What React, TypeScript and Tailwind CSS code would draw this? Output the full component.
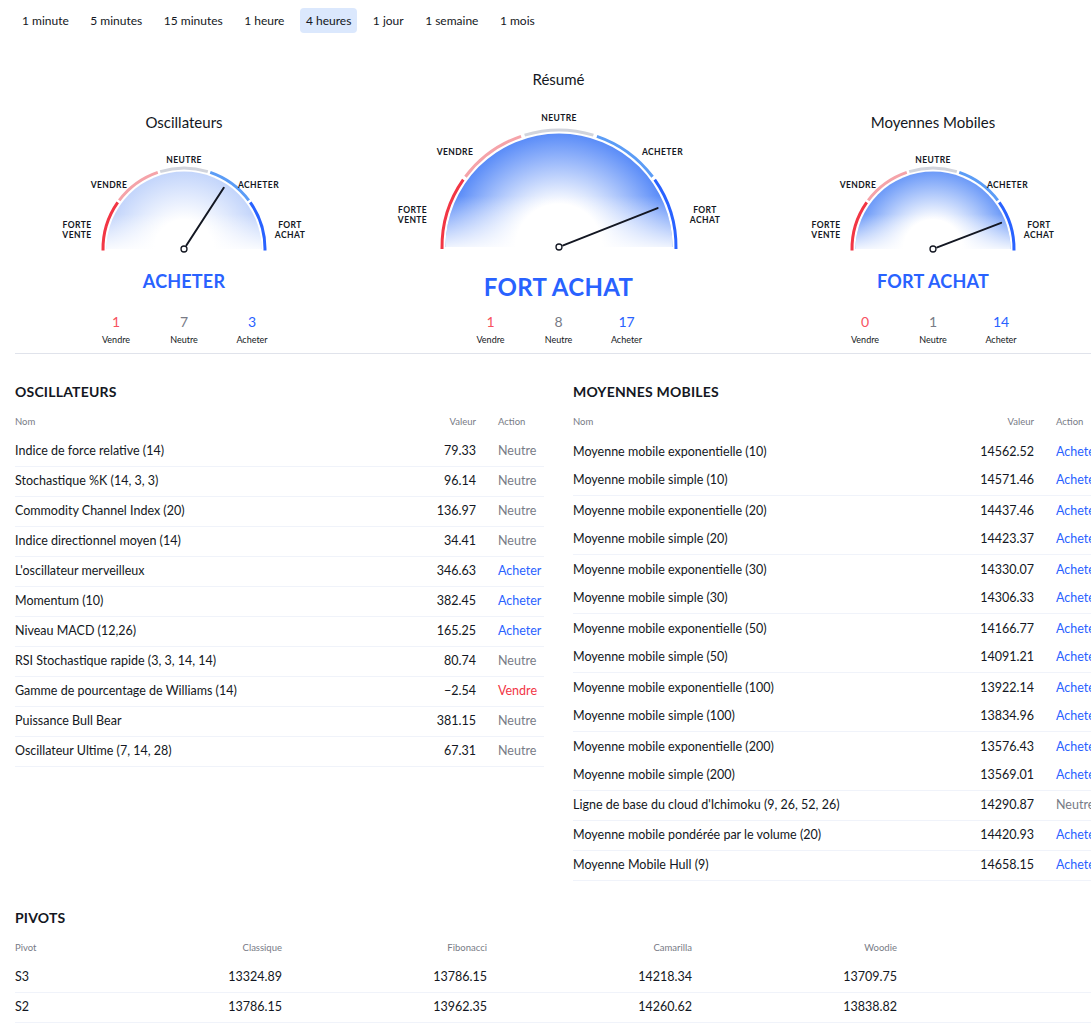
import React from 'react';

const FONT = "'Lato', 'Liberation Sans', sans-serif";

type Seg = { a1: number; a2: number; c: string };
const SEGS: Seg[] = [
  { a1: 181, a2: 144, c: '#f23645' },
  { a1: 144, a2: 108, c: '#f5a3a9' },
  { a1: 108, a2: 72, c: '#d1d4dc' },
  { a1: 72, a2: 36, c: '#5b9cf6' },
  { a1: 36, a2: -1, c: '#2962ff' },
];

function pt(cx: number, cy: number, r: number, a: number): [number, number] {
  const rad = (a * Math.PI) / 180;
  return [cx + r * Math.cos(rad), cy - r * Math.sin(rad)];
}

type Label = { x: number; y: number; lines: string[] };

function GaugeSvg(props: {
  id: string;
  w: number;
  h: number;
  cx: number;
  cy: number;
  R: number;
  angle: number;
  len: number;
  fill: string;
  labels: Label[];
}) {
  const { id, w, h, cx, cy, R, angle, len, fill, labels } = props;
  const g = 0.9;
  const fr = R - 3.5;
  const [nx0, ny0] = pt(cx, cy, 4.5, angle);
  const [nx1, ny1] = pt(cx, cy, len, angle);
  return (
    <svg width={w} height={h} viewBox={`0 0 ${w} ${h}`} className="block">
      <defs>
        <radialGradient id={`rg-${id}`} gradientUnits="userSpaceOnUse" cx={cx} cy={cy} r={fr}>
          <stop offset="0" stopColor="#ffffff" />
          <stop offset="0.38" stopColor="#ffffff" />
          <stop offset="1" stopColor={fill} />
        </radialGradient>
        <linearGradient id={`lg-${id}`} gradientUnits="userSpaceOnUse" x1="0" y1={cy - fr * 0.45} x2="0" y2={cy}>
          <stop offset="0" stopColor="#ffffff" stopOpacity="0" />
          <stop offset="1" stopColor="#ffffff" stopOpacity="0.9" />
        </linearGradient>
      </defs>
      <path d={`M ${cx - fr} ${cy} A ${fr} ${fr} 0 0 1 ${cx + fr} ${cy} Z`} fill={`url(#rg-${id})`} />
      <path d={`M ${cx - fr} ${cy} A ${fr} ${fr} 0 0 1 ${cx + fr} ${cy} Z`} fill={`url(#lg-${id})`} />
      {SEGS.map((s, i) => {
        const a1 = i === 0 ? s.a1 : s.a1 - g;
        const a2 = i === SEGS.length - 1 ? s.a2 : s.a2 + g;
        const [x1, y1] = pt(cx, cy, R, a1);
        const [x2, y2] = pt(cx, cy, R, a2);
        return (
          <path
            key={i}
            d={`M ${x1} ${y1} A ${R} ${R} 0 0 1 ${x2} ${y2}`}
            stroke={s.c}
            strokeWidth={3}
            fill="none"
          />
        );
      })}
      <line x1={nx0} y1={ny0} x2={nx1} y2={ny1} stroke="#131722" strokeWidth={2} strokeLinecap="round" />
      <circle cx={cx} cy={cy} r={3} fill="#ffffff" stroke="#131722" strokeWidth={1.3} />
      {labels.map((l, i) => (
        <text
          key={i}
          textAnchor="middle"
          fontFamily={FONT}
          fontSize={8.5}
          fontWeight={700}
          letterSpacing={0.4}
          fill="#131722"
        >
          {l.lines.map((t, j) => (
            <tspan key={j} x={cx + l.x} y={cy + l.y + j * 10 + 3}>
              {t}
            </tspan>
          ))}
        </text>
      ))}
    </svg>
  );
}

function Counts({ s, n, b }: { s: number; n: number; b: number }) {
  const items = [
    { v: s, l: 'Vendre', c: 'text-[#f7525f]' },
    { v: n, l: 'Neutre', c: 'text-[#787b86]' },
    { v: b, l: 'Acheter', c: 'text-[#2962ff]' },
  ];
  return (
    <div className="grid grid-cols-3 w-[204px]">
      {items.map((it) => (
        <div key={it.l} className="flex flex-col items-center">
          <div className={`text-[14px] leading-[18px] ${it.c}`}>{it.v}</div>
          <div className="text-[9px] leading-[12px] mt-[3px] text-[#131722]">{it.l}</div>
        </div>
      ))}
    </div>
  );
}

const sideLabels: Label[] = [
  { x: 0, y: -89, lines: ['NEUTRE'] },
  { x: -75, y: -64.5, lines: ['VENDRE'] },
  { x: 74.5, y: -64.5, lines: ['ACHETER'] },
  { x: -107, y: -24, lines: ['FORTE', 'VENTE'] },
  { x: 106, y: -24, lines: ['FORT', 'ACHAT'] },
];

const midLabels: Label[] = [
  { x: 0, y: -129, lines: ['NEUTRE'] },
  { x: -104, y: -95.5, lines: ['VENDRE'] },
  { x: 103.5, y: -95.5, lines: ['ACHETER'] },
  { x: -146.5, y: -37, lines: ['FORTE', 'VENTE'] },
  { x: 146, y: -37, lines: ['FORT', 'ACHAT'] },
];

function SideGauge(props: { id: string; title: string; label: string; angle: number; fill: string; s: number; n: number; b: number }) {
  return (
    <div className="w-[338px] flex flex-col items-center">
      <div className="mt-[78px] text-[15px] leading-[20px] text-[#131722]">{props.title}</div>
      <div className="mt-[17px]">
        <GaugeSvg id={props.id} w={260} h={106} cx={130} cy={100} R={81} angle={props.angle} len={73} fill={props.fill} labels={sideLabels} />
      </div>
      <div className="mt-[14px] text-[18px] leading-[24px] font-bold text-[#2962ff] tracking-[0.2px]">{props.label}</div>
      <div className="mt-[20px]">
        <Counts s={props.s} n={props.n} b={props.b} />
      </div>
    </div>
  );
}

function MidGauge() {
  return (
    <div className="w-[360px] flex flex-col items-center">
      <div className="mt-[35px] text-[15px] leading-[20px] text-[#131722]">Résumé</div>
      <div className="mt-[18px]">
        <GaugeSvg id="mid" w={340} h={146} cx={170} cy={140} R={117} angle={21.5} len={106} fill="#5a8cf8" labels={midLabels} />
      </div>
      <div className="mt-[19px] text-[24px] leading-[30px] font-bold text-[#2962ff] tracking-[0.3px]">FORT ACHAT</div>
      <div className="mt-[11px]">
        <Counts s={1} n={8} b={17} />
      </div>
    </div>
  );
}

type Row = { name: string; value: string; action: 'Neutre' | 'Acheter' | 'Vendre' };

const actionColor: Record<string, string> = {
  Neutre: 'text-[#787b86]',
  Acheter: 'text-[#2962ff]',
  Vendre: 'text-[#f23645]',
};

const osc: Row[] = [
  { name: 'Indice de force relative (14)', value: '79.33', action: 'Neutre' },
  { name: 'Stochastique %K (14, 3, 3)', value: '96.14', action: 'Neutre' },
  { name: 'Commodity Channel Index (20)', value: '136.97', action: 'Neutre' },
  { name: 'Indice directionnel moyen (14)', value: '34.41', action: 'Neutre' },
  { name: "L'oscillateur merveilleux", value: '346.63', action: 'Acheter' },
  { name: 'Momentum (10)', value: '382.45', action: 'Acheter' },
  { name: 'Niveau MACD (12,26)', value: '165.25', action: 'Acheter' },
  { name: 'RSI Stochastique rapide (3, 3, 14, 14)', value: '80.74', action: 'Neutre' },
  { name: 'Gamme de pourcentage de Williams (14)', value: '\u22122.54', action: 'Vendre' },
  { name: 'Puissance Bull Bear', value: '381.15', action: 'Neutre' },
  { name: 'Oscillateur Ultime (7, 14, 28)', value: '67.31', action: 'Neutre' },
];

const ma: Row[] = [
  { name: 'Moyenne mobile exponentielle (10)', value: '14562.52', action: 'Acheter' },
  { name: 'Moyenne mobile simple (10)', value: '14571.46', action: 'Acheter' },
  { name: 'Moyenne mobile exponentielle (20)', value: '14437.46', action: 'Acheter' },
  { name: 'Moyenne mobile simple (20)', value: '14423.37', action: 'Acheter' },
  { name: 'Moyenne mobile exponentielle (30)', value: '14330.07', action: 'Acheter' },
  { name: 'Moyenne mobile simple (30)', value: '14306.33', action: 'Acheter' },
  { name: 'Moyenne mobile exponentielle (50)', value: '14166.77', action: 'Acheter' },
  { name: 'Moyenne mobile simple (50)', value: '14091.21', action: 'Acheter' },
  { name: 'Moyenne mobile exponentielle (100)', value: '13922.14', action: 'Acheter' },
  { name: 'Moyenne mobile simple (100)', value: '13834.96', action: 'Acheter' },
  { name: 'Moyenne mobile exponentielle (200)', value: '13576.43', action: 'Acheter' },
  { name: 'Moyenne mobile simple (200)', value: '13569.01', action: 'Acheter' },
  { name: "Ligne de base du cloud d'Ichimoku (9, 26, 52, 26)", value: '14290.87', action: 'Neutre' },
  { name: 'Moyenne mobile pondérée par le volume (20)', value: '14420.93', action: 'Acheter' },
  { name: 'Moyenne Mobile Hull (9)', value: '14658.15', action: 'Acheter' },
];

function DataTable({ title, rows, paired }: { title: string; rows: Row[]; paired: boolean }) {
  return (
    <div className="min-w-0">
      <div className="text-[14px] leading-[18px] font-bold text-[#131722] tracking-[0.2px]">{title}</div>
      <div className="mt-[14px] flex items-center h-[14px] text-[9.5px] text-[#787b86]">
        <div className="flex-1">Nom</div>
        <div className="text-right">Valeur</div>
        <div className="w-[68px] pl-[22px]">Action</div>
      </div>
      <div className="mt-[8px]">
        {rows.map((r, i) => {
          const noBorder = paired && i < 12 && i % 2 === 0;
          return (
            <div
              key={i}
              className={
                noBorder
                  ? 'flex items-center h-[29px] pt-[1px] text-[12.5px] text-[#131722]'
                  : 'flex items-center h-[30px] border-b border-[#f0f3fa] text-[12.5px] text-[#131722]'
              }
            >
              <div className="flex-1 whitespace-nowrap">{r.name}</div>
              <div className="text-right whitespace-nowrap">{r.value}</div>
              <div className={`w-[68px] pl-[22px] whitespace-nowrap ${actionColor[r.action]}`}>{r.action}</div>
            </div>
          );
        })}
      </div>
    </div>
  );
}

const pivots = [
  ['S3', '13324.89', '13786.15', '14218.34', '13709.75'],
  ['S2', '13786.15', '13962.35', '14260.62', '13838.82'],
];

const tabs = ['1 minute', '5 minutes', '15 minutes', '1 heure', '4 heures', '1 jour', '1 semaine', '1 mois'];

export default function App() {
  return (
    <div className="w-full overflow-hidden bg-white" style={{ fontFamily: FONT }}>
      <div className="w-[1117px] pl-[15px] pr-[15px]">
        <div className="pt-[8px] flex items-center gap-[9.5px] pl-[1px]">
          {tabs.map((t) => (
            <div
              key={t}
              className={
                t === '4 heures'
                  ? 'h-[25px] px-[6px] flex items-center rounded-[4px] bg-[#dbe8fd] text-[12px] text-[#131722]'
                  : 'h-[25px] px-[6px] flex items-center rounded-[4px] text-[12px] text-[#131722]'
              }
            >
              {t}
            </div>
          ))}
        </div>

        <div className="flex justify-between items-start pt-[1px] pb-[7px] border-b border-[#e0e3eb]">
          <SideGauge id="osc" title="Oscillateurs" label="ACHETER" angle={57} fill="#c3d5fb" s={1} n={7} b={3} />
          <MidGauge />
          <SideGauge id="ma" title="Moyennes Mobiles" label="FORT ACHAT" angle={21} fill="#6c9af8" s={0} n={1} b={14} />
        </div>

        <div className="mt-[29px] grid grid-cols-2 gap-x-[29px]">
          <DataTable title="OSCILLATEURS" rows={osc} paired={false} />
          <DataTable title="MOYENNES MOBILES" rows={ma} paired={true} />
        </div>

        <div className="mt-[28px]">
          <div className="text-[14px] leading-[18px] font-bold text-[#131722] tracking-[0.2px]">PIVOTS</div>
          <div className="mt-[14px] grid grid-cols-[62px_repeat(5,205px)] items-center h-[14px] text-[9.5px] text-[#787b86]">
            <div>Pivot</div>
            <div className="text-right">Classique</div>
            <div className="text-right">Fibonacci</div>
            <div className="text-right">Camarilla</div>
            <div className="text-right">Woodie</div>
            <div></div>
          </div>
          <div className="mt-[8px]">
            {pivots.map((r) => (
              <div
                key={r[0]}
                className="grid grid-cols-[62px_repeat(5,205px)] items-center h-[30px] border-b border-[#f0f3fa] text-[12.5px] text-[#131722]"
              >
                {r.map((c, j) => (
                  <div key={j} className={j === 0 ? '' : 'text-right'}>
                    {c}
                  </div>
                ))}
                <div></div>
              </div>
            ))}
          </div>
        </div>
      </div>
    </div>
  );
}
